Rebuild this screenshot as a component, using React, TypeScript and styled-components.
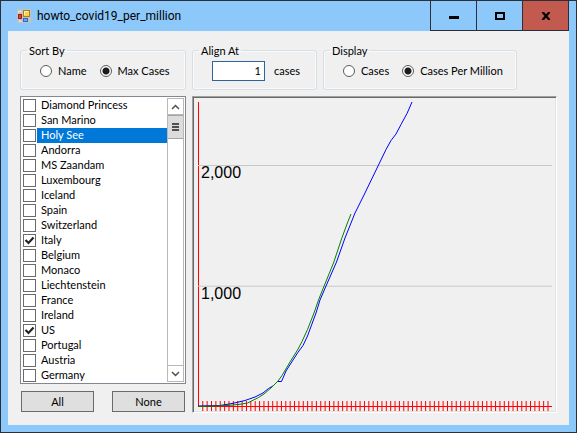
import React, { useState } from "react";
import styled, { createGlobalStyle } from "styled-components";

const GlobalStyle = createGlobalStyle`
  * { box-sizing: border-box; }
  body { margin: 0; }
  button, input { font: inherit; color: inherit; }
`;

const Window = styled.main`
  display: flex;
  flex-direction: column;
  min-height: 100vh;
  padding: 0 7px 7px;
  border: 1px solid #2d2f38;
  background: #8dc8fa;
  color: #000;
  font: 11px/15px Lato, "Liberation Sans", sans-serif;
`;

const TitleBar = styled.header`
  display: flex;
  align-items: center;
  gap: 6px;
  height: 30px;
  padding-left: 9px;
`;

const Title = styled.h1`
  flex: 1;
  margin: 0;
  font: 12px/16px Roboto, sans-serif;
`;

const WindowButtons = styled.div`
  display: flex;
  height: 30px;
`;

const WindowButton = styled.button<{ $close?: boolean }>`
  display: grid;
  place-items: center;
  width: ${(p) => (p.$close ? 47 : 46)}px;
  height: 30px;
  padding: 0;
  border: solid #2d2f38;
  border-width: 0 ${(p) => (p.$close ? 1 : 0)}px 1px 1px;
  background: ${(p) => (p.$close ? "#c35a50" : "transparent")};
`;

const Client = styled.div`
  flex: 1;
  display: flex;
  flex-direction: column;
  gap: 6px;
  padding: 12px;
  background: #f0f0f0;
`;

const Options = styled.div`
  display: grid;
  grid-template-columns: 166px 125px 194px;
  gap: 6px;
`;

const GroupBox = styled.fieldset`
  display: flex;
  align-items: center;
  min-width: 0;
  height: 47px;
  margin: 0;
  padding: 0 8px 6px;
  border: 1px solid #d5dfe5;
  border-radius: 3px;
  box-shadow: inset 0 0 0 1px #f8fafb;
`;

const Legend = styled.legend`
  margin-left: -2px;
  padding: 0 2px;
`;

const Choices = styled.div<{ $inset: number; $gap: number }>`
  display: flex;
  align-items: center;
  gap: ${(p) => p.$gap}px;
  padding-left: ${(p) => p.$inset}px;
  white-space: nowrap;
`;

const RadioLabel = styled.label`
  display: flex;
  align-items: center;
  gap: 6px;
`;

const Radio = styled.input`
  appearance: none;
  width: 12px;
  height: 12px;
  margin: 0;
  border: 1px solid #5c5c5c;
  border-radius: 50%;
  background: #fff;
  &:checked {
    background: radial-gradient(circle, #1c1c1c 3px, #fff 4px);
  }
`;

const NumberBox = styled.input`
  width: 53px;
  height: 20px;
  margin: 0;
  padding: 0 3px;
  border: 1px solid #2b659b;
  background: #fff;
  text-align: right;
  outline: none;
`;

const Body = styled.div`
  flex: 1;
  display: grid;
  grid-template-columns: 166px 1fr;
  gap: 6px;
`;

const Side = styled.div`
  display: flex;
  flex-direction: column;
  gap: 7px;
`;

const ListBox = styled.div`
  flex: 1;
  display: flex;
  padding: 1px;
  padding-bottom: 0;
  border: 1px solid #828790;
  background: #fff;
`;

const List = styled.ul`
  flex: 1;
  margin: 0;
  padding: 0;
  list-style: none;
`;

const Row = styled.label<{ $selected: boolean }>`
  display: flex;
  height: 15px;
  padding: 1px 0 1px 1px;
  line-height: 14px;
  color: ${(p) => (p.$selected ? "#fff" : "#000")};
`;

const CheckBox = styled.input`
  appearance: none;
  width: 13px;
  height: 13px;
  margin: 0 1px 0 0;
  border: 1px solid #6b6b6b;
  background: #fff;
  &:checked {
    background: #fff
      url("data:image/svg+xml,%3Csvg xmlns='http://www.w3.org/2000/svg' viewBox='0 0 11 11'%3E%3Cpath d='M1.5 5L4.5 8L9.5 2.5' fill='none' stroke='%23222' stroke-width='2.2'/%3E%3C/svg%3E");
  }
`;

const RowText = styled.span<{ $selected: boolean }>`
  flex: 1;
  margin: -1px 0;
  padding-left: 4px;
  background: ${(p) => (p.$selected ? "#0078d7" : "transparent")};
`;

const ScrollBar = styled.div`
  display: flex;
  flex-direction: column;
  width: 17px;
  margin-bottom: 1px;
  border: solid #b8b8b8;
  border-width: 0 1px;
`;

const ScrollButton = styled.button`
  display: grid;
  place-items: center;
  height: 17px;
  padding: 0;
  border: solid #b8b8b8;
  border-width: 1px 0;
  background: #fff;
`;

const Thumb = styled.div`
  display: grid;
  place-items: center;
  height: 24px;
  border: solid #a5a5a5;
  border-width: 1px 0;
  background: #dcdcdc;
`;

const Track = styled.div`
  flex: 1;
`;

const ButtonRow = styled.div`
  display: flex;
  justify-content: space-between;
  padding: 0 1px 1px;
`;

const PushButton = styled.button`
  width: 73px;
  height: 21px;
  padding: 0;
  border: 1px solid #6b6b6b;
  background: #dfdfdf;
`;

const ChartBox = styled.div`
  display: flex;
  padding: 1px;
  border: 1px solid;
  border-color: #a0a0a0 #fff #fff #a0a0a0;
  box-shadow: inset 1px 1px #696969, inset -1px -1px #e3e3e3;
`;

const Chart = styled.svg`
  width: 100%;
  height: 100%;
  font: 16px "Liberation Sans", sans-serif;
`;

const countries = [
  "Diamond Princess", "San Marino", "Holy See", "Andorra", "MS Zaandam",
  "Luxembourg", "Iceland", "Spain", "Switzerland", "Italy", "Belgium",
  "Monaco", "Liechtenstein", "France", "Ireland", "US", "Portugal",
  "Austria", "Germany",
];

const usCurve =
  "4,308 26,307.5 38,305.5 51,302.5 61,299 69,295 74.5,290.5 79,288 83.5,283.5 87.5,283.5 92,273 103.5,255 109,247.5 113.5,238 122,215 126,202 132,188 142.5,164 151,140 161,115 170,97 184.5,67 192,51.5 197,42.5 202,36 207,26.5 213,15.5 218,4";
const italyCurve =
  "4,308.5 33,307.5 46,306.3 53.5,305 64.5,299.5 70,296 78,289 84,283 88,277.5 96,264 103.5,252 108,243.5 113.5,231.5 120,215 124.5,202 130.5,187 139.5,165 147.5,141 153,126 157,116";

const ticks = Array.from({ length: 80 }, (_, i) => 4.4 + (i + 1) * 4.37);

function AppIcon() {
  return (
    <svg width="14" height="14" viewBox="0 0 14 14" aria-hidden="true">
      <rect width="14" height="14" fill="#c3c3c3" />
      <rect x="6.5" y="1.5" width="6" height="6" fill="#fbd34e" stroke="#a9801d" />
      <path d="M7.5 6V2.5H11" fill="none" stroke="#fff2b0" />
      <rect x="1.5" y="5.5" width="3" height="4" fill="#e0402c" stroke="#a51d12" />
      <rect x="6.5" y="9.5" width="4" height="3" fill="#6da4f5" stroke="#3565c5" />
      <path d="M4.5 2.5H1.5V4M4.5 12.5H2.5V11" fill="none" stroke="#e8e8e8" />
    </svg>
  );
}

function CaseChart() {
  return (
    <Chart viewBox="0 0 361 313" role="img" aria-label="Cases per million by day">
      <g stroke="#ff0000" fill="none">
        <path d="M4.5 4V309" />
        <path d="M4 308.5H358" />
        {ticks.map((x) => (
          <path key={x} d={`M${x} 303V313`} />
        ))}
      </g>
      <g stroke="#c8c8c8">
        <path d="M4 67.5H358M4 188.2H358" />
      </g>
      <text x="7" y="80">2,000</text>
      <text x="7" y="201">1,000</text>
      <g fill="none">
        <polyline points={usCurve} stroke="#0000ff" />
        <polyline points={italyCurve} stroke="#008000" />
      </g>
    </Chart>
  );
}

export default function App() {
  const [checked, setChecked] = useState(["Italy", "US"]);
  const [selected, setSelected] = useState("Holy See");

  const toggle = (name: string) => {
    setSelected(name);
    setChecked((c) => (c.includes(name) ? c.filter((n) => n !== name) : [...c, name]));
  };

  return (
    <>
      <GlobalStyle />
      <Window>
        <TitleBar>
          <AppIcon />
          <Title>howto_covid19_per_million</Title>
          <WindowButtons>
            <WindowButton aria-label="Minimize">
              <svg width="10" height="10">
                <rect y="5" width="10" height="3" />
              </svg>
            </WindowButton>
            <WindowButton aria-label="Maximize">
              <svg width="10" height="8">
                <rect x="1" y="1" width="8" height="6" fill="none" stroke="#000" strokeWidth="2" />
              </svg>
            </WindowButton>
            <WindowButton $close aria-label="Close">
              <svg width="10" height="8">
                <path d="M1.5 0L8.5 8M8.5 0L1.5 8" stroke="#000" strokeWidth="2.2" />
              </svg>
            </WindowButton>
          </WindowButtons>
        </TitleBar>
        <Client>
          <Options>
            <GroupBox>
              <Legend>Sort By</Legend>
              <Choices $inset={11} $gap={13}>
                <RadioLabel><Radio type="radio" name="sort" />Name</RadioLabel>
                <RadioLabel><Radio type="radio" name="sort" defaultChecked />Max Cases</RadioLabel>
              </Choices>
            </GroupBox>
            <GroupBox>
              <Legend>Align At</Legend>
              <Choices $inset={11} $gap={9}>
                <NumberBox id="align" defaultValue="1" />
                <label htmlFor="align">cases</label>
              </Choices>
            </GroupBox>
            <GroupBox>
              <Legend>Display</Legend>
              <Choices $inset={11} $gap={13}>
                <RadioLabel><Radio type="radio" name="display" />Cases</RadioLabel>
                <RadioLabel><Radio type="radio" name="display" defaultChecked />Cases Per Million</RadioLabel>
              </Choices>
            </GroupBox>
          </Options>
          <Body>
            <Side>
              <ListBox>
                <List>
                  {countries.map((name) => (
                    <li key={name}>
                      <Row $selected={name === selected}>
                        <CheckBox
                          type="checkbox"
                          checked={checked.includes(name)}
                          onChange={() => toggle(name)}
                        />
                        <RowText $selected={name === selected}>{name}</RowText>
                      </Row>
                    </li>
                  ))}
                </List>
                <ScrollBar>
                  <ScrollButton aria-label="Scroll up">
                    <svg width="9" height="6">
                      <path d="M1 5L4.5 1.5L8 5" fill="none" stroke="#505050" strokeWidth="1.5" />
                    </svg>
                  </ScrollButton>
                  <Thumb>
                    <svg width="7" height="8">
                      <path d="M0 1H7M0 4H7M0 7H7" stroke="#505050" strokeWidth="2" />
                    </svg>
                  </Thumb>
                  <Track />
                  <ScrollButton aria-label="Scroll down">
                    <svg width="9" height="6">
                      <path d="M1 1L4.5 4.5L8 1" fill="none" stroke="#505050" strokeWidth="1.5" />
                    </svg>
                  </ScrollButton>
                </ScrollBar>
              </ListBox>
              <ButtonRow>
                <PushButton onClick={() => setChecked(countries)}>All</PushButton>
                <PushButton onClick={() => setChecked([])}>None</PushButton>
              </ButtonRow>
            </Side>
            <ChartBox>
              <CaseChart />
            </ChartBox>
          </Body>
        </Client>
      </Window>
    </>
  );
}
